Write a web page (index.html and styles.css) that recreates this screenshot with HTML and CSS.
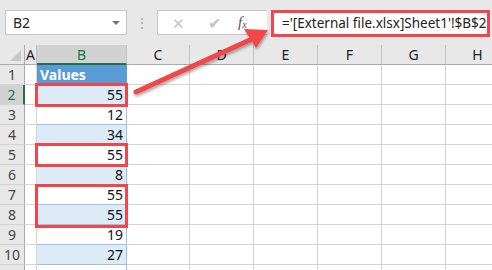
FILE: index.html
```html
<!DOCTYPE html>
<html lang="en">
    <head>
        <meta charset="UTF-8">
        <title>External reference</title>
        <link rel="stylesheet" href="styles.css">
    </head>
    <body>
        <div class="sheet">
            <div class="toolbar">
                <div class="name-box">
                    <span>B2</span>
                    <span class="drop"></span>
                </div>
                <div class="grip">&#8942;</div>
                <div class="fx-box">
                    <span class="cancel">&#10005;</span>
                    <span class="enter">&#10004;</span>
                    <span class="fx">f<sub>x</sub></span>
                </div>
                <div class="formula">='[External file.xlsx]Sheet1'!$B$2</div>
            </div>

            <div class="grid">
                <div class="corner"><span class="tri"></span></div>
                <div class="col">A</div>
                <div class="col active">B</div>
                <div class="col">C</div>
                <div class="col">D</div>
                <div class="col">E</div>
                <div class="col">F</div>
                <div class="col">G</div>
                <div class="col">H</div>

                <div class="row">1</div><div class="cell"></div><div class="cell head">Values</div><div class="cell"></div><div class="cell"></div><div class="cell"></div><div class="cell"></div><div class="cell"></div><div class="cell"></div>
                <div class="row active">2</div><div class="cell"></div><div class="cell val band">55</div><div class="cell"></div><div class="cell"></div><div class="cell"></div><div class="cell"></div><div class="cell"></div><div class="cell"></div>
                <div class="row">3</div><div class="cell"></div><div class="cell val">12</div><div class="cell"></div><div class="cell"></div><div class="cell"></div><div class="cell"></div><div class="cell"></div><div class="cell"></div>
                <div class="row">4</div><div class="cell"></div><div class="cell val band">34</div><div class="cell"></div><div class="cell"></div><div class="cell"></div><div class="cell"></div><div class="cell"></div><div class="cell"></div>
                <div class="row">5</div><div class="cell"></div><div class="cell val">55</div><div class="cell"></div><div class="cell"></div><div class="cell"></div><div class="cell"></div><div class="cell"></div><div class="cell"></div>
                <div class="row">6</div><div class="cell"></div><div class="cell val band">8</div><div class="cell"></div><div class="cell"></div><div class="cell"></div><div class="cell"></div><div class="cell"></div><div class="cell"></div>
                <div class="row">7</div><div class="cell"></div><div class="cell val">55</div><div class="cell"></div><div class="cell"></div><div class="cell"></div><div class="cell"></div><div class="cell"></div><div class="cell"></div>
                <div class="row">8</div><div class="cell"></div><div class="cell val band">55</div><div class="cell"></div><div class="cell"></div><div class="cell"></div><div class="cell"></div><div class="cell"></div><div class="cell"></div>
                <div class="row">9</div><div class="cell"></div><div class="cell val">19</div><div class="cell"></div><div class="cell"></div><div class="cell"></div><div class="cell"></div><div class="cell"></div><div class="cell"></div>
                <div class="row">10</div><div class="cell"></div><div class="cell val band">27</div><div class="cell"></div><div class="cell"></div><div class="cell"></div><div class="cell"></div><div class="cell"></div><div class="cell"></div>
                <div class="row"></div><div class="cell"></div><div class="cell val"></div><div class="cell"></div><div class="cell"></div><div class="cell"></div><div class="cell"></div><div class="cell"></div><div class="cell"></div>

                <!-- highlight boxes -->
                <div class="mark mark-2"></div>
                <div class="mark mark-5"></div>
                <div class="mark mark-78"></div>
            </div>

            <svg class="arrow" width="492" height="270" viewBox="0 0 492 270">
                <defs>
                    <filter id="shadow" x="-10%" y="-10%" width="130%" height="130%">
                        <feDropShadow dx="1" dy="2" stdDeviation="1.5" flood-color="#000" flood-opacity="0.35"/>
                    </filter>
                </defs>
                <g filter="url(#shadow)">
                    <line x1="136" y1="92" x2="252" y2="39" stroke="#f2464a" stroke-width="5" stroke-linecap="round"/>
                    <polygon points="268,30 244,29 256,48" fill="#f2464a"/>
                </g>
            </svg>
        </div>
    </body>
</html>
```

FILE: styles.css
```css
body {
    margin: 0;
    background: #fff;
    overflow: hidden;
}

.sheet {
    position: relative;
    width: 492px;
    height: 270px;
    overflow: hidden;
    font-family: "Noto Sans", "Liberation Sans", sans-serif;
}

.toolbar {
    display: flex;
    align-items: flex-start;
    height: 45px;
    padding-top: 10px;
    box-sizing: border-box;
    background: #e8e8e8;
}

.name-box {
    display: flex;
    align-items: center;
    justify-content: space-between;
    width: 122px;
    height: 25px;
    margin-left: 5px;
    padding: 0 6px 0 7px;
    box-sizing: border-box;
    background: #fff;
    border: 1px solid #c6c6c6;
    font-size: 14px;
    color: #222;
}

.drop {
    width: 0;
    height: 0;
    border-left: 4px solid transparent;
    border-right: 4px solid transparent;
    border-top: 4px solid #777;
}

.grip {
    width: 30px;
    height: 25px;
    line-height: 25px;
    text-align: center;
    color: #a8a8a8;
    font-size: 14px;
}

.fx-box {
    display: flex;
    align-items: center;
    width: 110px;
    height: 25px;
    box-sizing: border-box;
    background: #fff;
    border: 1px solid #c6c6c6;
    border-right: none;
}

.cancel,
.enter {
    width: 30px;
    text-align: center;
    color: #c4c4c4;
    font-size: 15px;
}

.cancel {
    margin-left: 5px;
}

.enter {
    margin-left: 6px;
    font-size: 16px;
}

.fx {
    margin-left: 9px;
    font-family: "Liberation Serif", serif;
    font-style: italic;
    font-size: 15px;
    color: #555;
}

.fx sub {
    font-size: 10px;
    vertical-align: -1px;
}

.formula {
    width: 219px;
    height: 27px;
    margin-left: 4px;
    padding-left: 8px;
    box-sizing: border-box;
    background: #fff;
    border: 3px solid #f2464a;
    line-height: 21px;
    font-size: 13.5px;
    color: #222;
    white-space: nowrap;
    overflow: hidden;
}

.grid {
    position: relative;
    display: grid;
    grid-template-columns: 25px 12px 90px 63px 64px 64px 64px 64px 64px;
    grid-auto-rows: 20px;
    font-size: 14px;
}

.corner {
    position: relative;
    background: #e8e8e8;
    border-right: 1px solid #ababab;
    border-bottom: 1px solid #ababab;
    box-sizing: border-box;
}

.tri {
    position: absolute;
    right: 3px;
    bottom: 3px;
    width: 0;
    height: 0;
    border-left: 11px solid transparent;
    border-bottom: 11px solid #c8c8c8;
}

.col {
    background: #e8e8e8;
    border-right: 1px solid #c0c0c0;
    border-bottom: 1px solid #ababab;
    box-sizing: border-box;
    text-align: center;
    line-height: 20px;
    color: #222;
}

.col.active {
    background: #d2d2d2;
    border-bottom: 2px solid #217346;
    color: #217346;
}

.row {
    background: #e8e8e8;
    border-right: 1px solid #ababab;
    border-bottom: 1px solid #d4d4d4;
    box-sizing: border-box;
    text-align: center;
    line-height: 20px;
    color: #444;
}

.row.active {
    background: #d2d2d2;
    border-right: 2px solid #217346;
    color: #217346;
}

.cell {
    border-right: 1px solid #d4d4d4;
    border-bottom: 1px solid #d4d4d4;
    box-sizing: border-box;
}

.head {
    background: #5b9bd5;
    border-right: 1px solid #5b9bd5;
    color: #fff;
    font-weight: bold;
    font-size: 14px;
    line-height: 19px;
    padding-left: 3px;
}

.val {
    border-right: 1px solid #9bc2e6;
    border-bottom: 1px solid #9bc2e6;
    text-align: right;
    padding-right: 3px;
    line-height: 20px;
    color: #111;
}

.band {
    background: #ddebf7;
}

.mark {
    position: absolute;
    left: 35px;
    width: 93px;
    border: 3px solid #f2464a;
    box-sizing: border-box;
}

.mark-2 {
    top: 38px;
    height: 24px;
}

.mark-5 {
    top: 98px;
    height: 24px;
}

.mark-78 {
    top: 139px;
    height: 44px;
}

.arrow {
    position: absolute;
    left: 0;
    top: 0;
    pointer-events: none;
}
```
